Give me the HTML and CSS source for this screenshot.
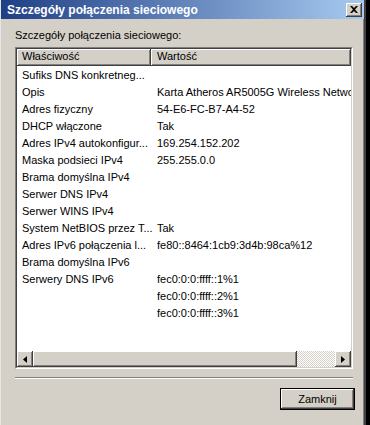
FILE: index.html
```html
<!DOCTYPE html>
<html lang="pl">
<head>
  <meta charset="UTF-8">
  <title>Szczegóły połączenia sieciowego</title>
  <link rel="stylesheet" href="styles.css">
</head>
<body>

  <div class="okno">
    <div class="pasek-tytulu">
      <span class="tytul">Szczegóły połączenia sieciowego</span>
      <button class="zamknij-x">
        <svg width="8" height="7" viewBox="0 0 8 7">
          <path d="M0 0h2l2 2 2-2h2L5 3.5 8 7H6L4 5 2 7H0l3-3.5z" fill="#000"/>
        </svg>
      </button>
    </div>

    <div class="tresc">
      <div class="etykieta">Szczegóły połączenia sieciowego:</div>

      <div class="lista">
        <div class="lista-wnetrze">
          <div class="naglowek">
            <div class="kol-nazwa">Właściwość</div>
            <div class="kol-wartosc">Wartość</div>
          </div>

          <div class="wiersze">
            <div class="wiersz"><span class="nazwa">Sufiks DNS konkretneg...</span><span class="wartosc"></span></div>
            <div class="wiersz"><span class="nazwa">Opis</span><span class="wartosc">Karta Atheros AR5005G Wireless Network Adapter</span></div>
            <div class="wiersz"><span class="nazwa">Adres fizyczny</span><span class="wartosc">54-E6-FC-B7-A4-52</span></div>
            <div class="wiersz"><span class="nazwa">DHCP włączone</span><span class="wartosc">Tak</span></div>
            <div class="wiersz"><span class="nazwa">Adres IPv4 autokonfigur...</span><span class="wartosc">169.254.152.202</span></div>
            <div class="wiersz"><span class="nazwa">Maska podsieci IPv4</span><span class="wartosc">255.255.0.0</span></div>
            <div class="wiersz"><span class="nazwa">Brama domyślna IPv4</span><span class="wartosc"></span></div>
            <div class="wiersz"><span class="nazwa">Serwer DNS IPv4</span><span class="wartosc"></span></div>
            <div class="wiersz"><span class="nazwa">Serwer WINS IPv4</span><span class="wartosc"></span></div>
            <div class="wiersz"><span class="nazwa">System NetBIOS przez T...</span><span class="wartosc">Tak</span></div>
            <div class="wiersz"><span class="nazwa">Adres IPv6 połączenia l...</span><span class="wartosc">fe80::8464:1cb9:3d4b:98ca%12</span></div>
            <div class="wiersz"><span class="nazwa">Brama domyślna IPv6</span><span class="wartosc"></span></div>
            <div class="wiersz"><span class="nazwa">Serwery DNS IPv6</span><span class="wartosc">fec0:0:0:ffff::1%1</span></div>
            <div class="wiersz"><span class="nazwa"></span><span class="wartosc">fec0:0:0:ffff::2%1</span></div>
            <div class="wiersz"><span class="nazwa"></span><span class="wartosc">fec0:0:0:ffff::3%1</span></div>
          </div>

          <div class="przewijanie">
            <div class="strzalka">
              <svg width="4" height="7" viewBox="0 0 4 7"><path d="M4 0v7L0 3.5z" fill="#000"/></svg>
            </div>
            <div class="suwak"></div>
            <div class="tor"></div>
            <div class="strzalka">
              <svg width="4" height="7" viewBox="0 0 4 7"><path d="M0 0v7l4-3.5z" fill="#000"/></svg>
            </div>
          </div>
        </div>
      </div>

      <div class="separator"></div>

      <div class="przyciski">
        <button class="przycisk">Zamknij</button>
      </div>
    </div>
  </div>

</body>
</html>
```

FILE: styles.css
```css
body {
  margin: 0;
  padding: 0;
  width: 370px;
  height: 425px;
  overflow: hidden;
  background: #000;
  font-family: 'Liberation Sans', Arial, sans-serif;
  font-size: 11px;
  color: #000;
}

.okno {
  width: 363px;
  height: 425px;
  background: #d4d0c8;
  border-left: 1px solid #e8e6e0;
  border-right: 2px solid #404040;
  box-shadow: inset -1px 0 #808080;
  display: flex;
  flex-direction: column;
}

.pasek-tytulu {
  height: 19px;
  padding: 0 2px 0 6px;
  background: linear-gradient(to right, #1f3f86, #a6caf0);
  display: flex;
  align-items: center;
  justify-content: space-between;
}

.tytul {
  color: #fff;
  font-weight: bold;
  font-size: 12px;
}

.zamknij-x {
  width: 16px;
  height: 14px;
  padding: 0;
  border: none;
  background: #d4d0c8;
  box-shadow: inset -1px -1px #404040, inset 1px 1px #fff, inset -2px -2px #808080;
  display: flex;
  align-items: center;
  justify-content: center;
}

.tresc {
  flex: 1;
  padding: 10px 11px 0 14px;
  display: flex;
  flex-direction: column;
}

.etykieta {
  height: 13px;
  line-height: 13px;
  margin-bottom: 5px;
}

.lista {
  height: 320px;
  border-top: 1px solid #808080;
  border-left: 1px solid #808080;
  border-right: 1px solid #fff;
  border-bottom: 1px solid #fff;
}

.lista-wnetrze {
  height: 100%;
  box-sizing: border-box;
  border-top: 1px solid #404040;
  border-left: 1px solid #404040;
  border-right: 1px solid #d4d0c8;
  border-bottom: 1px solid #d4d0c8;
  background: #fff;
  display: flex;
  flex-direction: column;
  overflow: hidden;
}

.naglowek {
  height: 17px;
  display: flex;
  flex-shrink: 0;
}

.kol-nazwa,
.kol-wartosc {
  box-sizing: border-box;
  height: 17px;
  line-height: 15px;
  padding-left: 5px;
  background: #d4d0c8;
  box-shadow: inset -1px -1px #404040, inset 1px 1px #fff, inset -2px -2px #808080;
  white-space: nowrap;
}

.kol-nazwa {
  width: 134px;
}

.kol-wartosc {
  flex: 1;
  padding-left: 6px;
}

.wiersze {
  flex: 1;
  padding-top: 1px;
}

.wiersz {
  height: 17px;
  line-height: 17px;
  display: flex;
  white-space: nowrap;
}

.nazwa {
  width: 135px;
  flex-shrink: 0;
  padding-left: 5px;
  box-sizing: border-box;
}

.wartosc {
  padding-left: 5px;
}

.przewijanie {
  height: 16px;
  display: flex;
  flex-shrink: 0;
}

.strzalka {
  width: 16px;
  height: 16px;
  box-sizing: border-box;
  background: #d4d0c8;
  box-shadow: inset -1px -1px #404040, inset 1px 1px #fff, inset -2px -2px #808080;
  display: flex;
  align-items: center;
  justify-content: center;
}

.suwak {
  width: 264px;
  background: #d4d0c8;
  box-shadow: inset -1px -1px #404040, inset 1px 1px #fff, inset -2px -2px #808080;
}

.tor {
  flex: 1;
  background: repeating-conic-gradient(#fff 0 25%, #d4d0c8 0 50%) 0 0 / 2px 2px;
}

.separator {
  margin-top: 8px;
  height: 1px;
  background: #808080;
  border-bottom: 1px solid #fff;
}

.przyciski {
  margin-top: 9px;
  display: flex;
  justify-content: flex-end;
  margin-right: -2px;
}

.przycisk {
  width: 75px;
  height: 22px;
  padding: 0;
  border: 1px solid #000;
  background: #d4d0c8;
  box-shadow: inset -1px -1px #404040, inset 1px 1px #fff, inset -2px -2px #808080;
  font-family: 'Liberation Sans', Arial, sans-serif;
  font-size: 11px;
  color: #000;
}
```
